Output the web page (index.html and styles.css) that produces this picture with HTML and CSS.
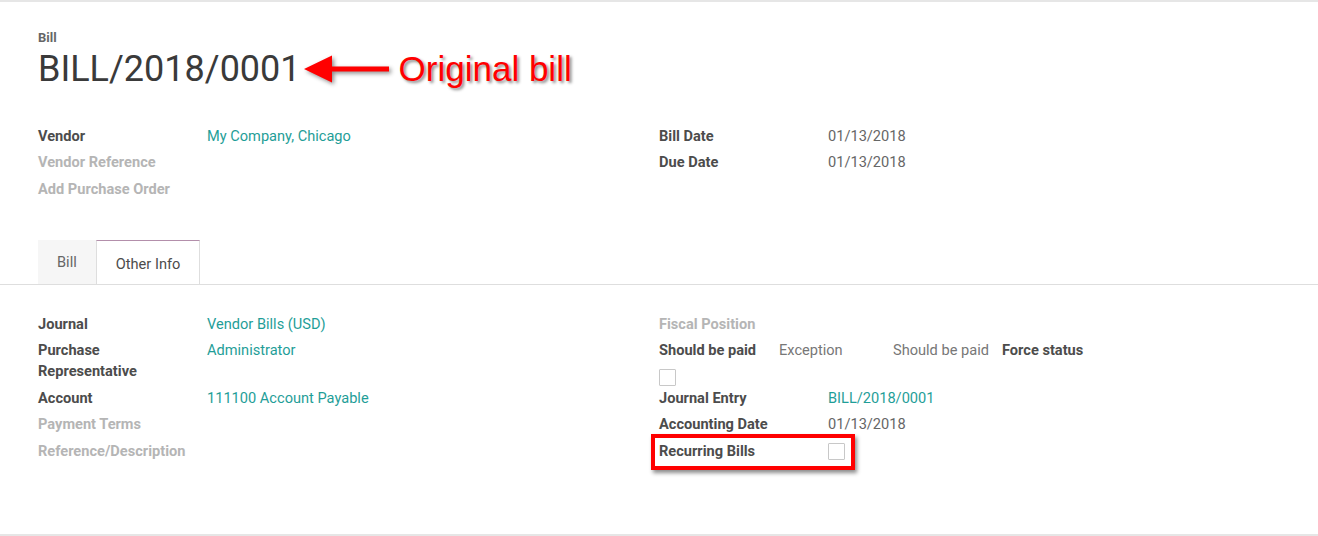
FILE: index.html
```html
<!DOCTYPE html>
<html>
<head>
<meta charset="utf-8">
<link rel="stylesheet" href="styles.css">
</head>
<body>
<div class="sheet">
  <div class="title-area">
    <div class="doc-type">Bill</div>
    <div class="title-line">
      <h1 class="doc-name">BILL/2018/0001</h1>
      <svg class="arrow" width="90" height="32" viewBox="0 0 90 32"><polygon points="1,16 29,2.5 29,13.5 86,13.5 86,18.5 29,18.5 29,29.5" fill="#ff0000"/></svg>
      <span class="note">Original bill</span>
    </div>
  </div>

  <div class="group top-group">
    <div class="col">
      <div class="row"><div class="lbl">Vendor</div><div class="val link">My Company, Chicago</div></div>
      <div class="row"><div class="lbl muted">Vendor Reference</div><div class="val"></div></div>
      <div class="row"><div class="lbl muted">Add Purchase Order</div><div class="val"></div></div>
    </div>
    <div class="col">
      <div class="row"><div class="lbl">Bill Date</div><div class="val">01/13/2018</div></div>
      <div class="row"><div class="lbl">Due Date</div><div class="val">01/13/2018</div></div>
    </div>
  </div>

  <div class="tabs">
    <div class="tab">Bill</div>
    <div class="tab active">Other Info</div>
  </div>

  <div class="group tab-group">
    <div class="col">
      <div class="row"><div class="lbl">Journal</div><div class="val link">Vendor Bills (USD)</div></div>
      <div class="row"><div class="lbl">Purchase<br>Representative</div><div class="val link">Administrator</div></div>
      <div class="row"><div class="lbl">Account</div><div class="val link">111100 Account Payable</div></div>
      <div class="row"><div class="lbl muted">Payment Terms</div><div class="val"></div></div>
      <div class="row"><div class="lbl muted">Reference/Description</div><div class="val"></div></div>
    </div>
    <div class="col">
      <div class="row"><div class="lbl muted">Fiscal Position</div><div class="val"></div></div>
      <div class="row paid-row">
        <div class="paid-line">
          <span class="lbl-inline">Should be paid</span>
          <span class="opt">Exception</span>
          <span class="opt">Should be paid</span>
          <span class="lbl-inline">Force status</span>
        </div>
        <div class="cb-line"><span class="checkbox"></span></div>
      </div>
      <div class="row"><div class="lbl">Journal Entry</div><div class="val link">BILL/2018/0001</div></div>
      <div class="row"><div class="lbl">Accounting Date</div><div class="val">01/13/2018</div></div>
      <div class="row annot">
        <div class="lbl">Recurring Bills</div>
        <div class="val"><span class="checkbox cb-val"></span></div>
        <div class="highlight"></div>
      </div>
    </div>
  </div>
</div>
</body>
</html>
```

FILE: styles.css
```css
html, body {
  margin: 0;
  padding: 0;
  background: #ffffff;
}

body {
  font-family: Roboto, "Noto Sans", sans-serif;
  font-size: 14.6px;
  color: #4c4c4c;
}

.sheet {
  height: 536px;
  box-sizing: border-box;
  border-top: 2px solid #e6e6e6;
  border-bottom: 2px solid #e6e6e6;
  margin: 0;
}

.title-area {
  padding: 28px 38px 0;
}

.doc-type {
  font-size: 13px;
  font-weight: bold;
  color: #666666;
  line-height: 16px;
}

.title-line {
  display: flex;
  align-items: center;
  margin-top: 3px;
}

.doc-name {
  margin: 0;
  font-size: 36px;
  font-weight: normal;
  line-height: 40px;
  color: #3a3a3a;
}

.arrow {
  margin-left: 2px;
  filter: drop-shadow(2px 2px 2px rgba(0, 0, 0, 0.45));
}

.note {
  margin-left: 6px;
  font-family: "Liberation Sans", Arial, sans-serif;
  font-size: 35px;
  line-height: 40px;
  color: #ff0000;
  text-shadow: 2px 2px 3px rgba(0, 0, 0, 0.45);
}

.group {
  display: grid;
  grid-template-columns: 621px 621px;
  padding: 0 38px;
}

.top-group {
  margin-top: 34px;
  height: 80px;
}

.tab-group {
  margin-top: 26px;
}

.row {
  display: flex;
  padding: 2.75px 0;
  line-height: 21px;
}

.lbl {
  width: 169px;
  flex: none;
  font-weight: bold;
  color: #4c4c4c;
}

.lbl.muted {
  color: #b5b5b5;
}

.val {
  color: #666666;
}

.val.link {
  color: #1f9e98;
}

.tabs {
  display: flex;
  margin-top: 37px;
  padding-left: 38px;
  border-bottom: 1px solid #dedede;
}

.tab {
  height: 44px;
  box-sizing: border-box;
  padding: 11.5px 19px;
  line-height: 21px;
  color: #666666;
  background: #f6f6f6;
}

.tab.active {
  background: #ffffff;
  color: #4c4c4c;
  padding-top: 12.5px;
  border-top: 1px solid #b38fab;
  border-left: 1px solid #dedede;
  border-right: 1px solid #dedede;
}

.paid-row {
  flex-direction: column;
}

.paid-line {
  display: grid;
  grid-template-columns: 120px 114px 109px auto;
}

.lbl-inline {
  font-weight: bold;
  color: #4c4c4c;
}

.opt {
  color: #777777;
}

.cb-line {
  height: 21px;
}

.checkbox {
  display: block;
  width: 17px;
  height: 17px;
  box-sizing: border-box;
  border: 1px solid #c8c8c8;
  border-radius: 1px;
  background: #ffffff;
}

.cb-line .checkbox {
  margin-top: 8px;
}

.cb-val {
  margin-top: 2px;
}

.annot {
  position: relative;
}

.highlight {
  position: absolute;
  left: -8px;
  top: -4px;
  width: 204px;
  height: 36px;
  box-sizing: border-box;
  border: 4px solid #ff0000;
  box-shadow: 2px 3px 4px rgba(0, 0, 0, 0.45);
}
```
